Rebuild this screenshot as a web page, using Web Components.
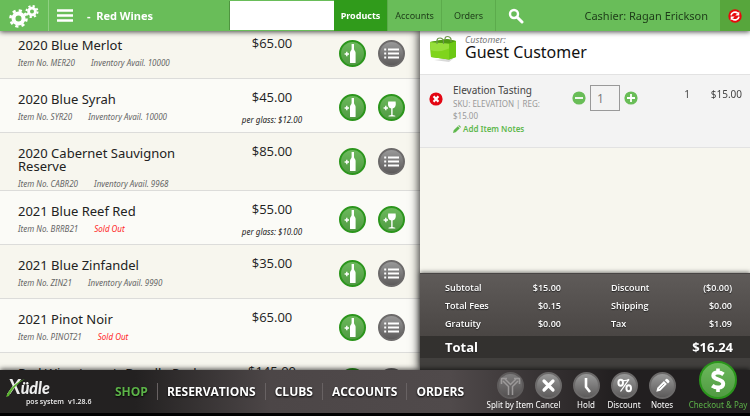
<!DOCTYPE html>
<html lang="en">
<head>
<meta charset="utf-8">
<title>POS - Red Wines</title>
<style>
    html, body {
        margin: 0;
        height: 100%;
    }
    body {
        font-family: "Open Sans", "Noto Sans", sans-serif;
        overflow: hidden;
        background: #000;
    }
</style>
</head>
<body>
<pos-app></pos-app>
<script>
const ICONS = {
    gears: `<svg viewBox="0 0 30 24" width="30" height="24">
        <g fill="none" stroke="#fff">
            <circle cx="9.500" cy="14.500" r="5" stroke-width="4"/>
            <circle cx="9.500" cy="14.500" r="8" stroke-width="2.600" stroke-dasharray="3.140 3.143"/>
            <circle cx="23" cy="7.500" r="3.400" stroke-width="2.800"/>
            <circle cx="23" cy="7.500" r="5.500" stroke-width="2" stroke-dasharray="2.160 2.160"/>
        </g></svg>`,
    menu: `<svg viewBox="0 0 16 13" width="16" height="13"><path d="M0 1.500h16M0 6.500h16M0 11.500h16" stroke="#fff" stroke-width="2.600"/></svg>`,
    search: `<svg viewBox="0 0 16 16" width="16" height="16"><circle cx="6" cy="6" r="4" fill="none" stroke="#fff" stroke-width="2.400"/><path d="M9 9l5 5" stroke="#fff" stroke-width="3" stroke-linecap="round"/></svg>`,
    refresh: `<svg viewBox="0 0 14 14" width="14" height="14"><circle cx="7" cy="7" r="6.700" fill="#e8090d"/>
        <path d="M3 6.400A4 4 0 0 1 9.700 4.200M11 7.600A4 4 0 0 1 4.300 9.800" fill="none" stroke="#fff" stroke-width="1.700"/>
        <path d="M11.300 2.600v4H7.300zM2.700 11.400v-4h4z" fill="#fff"/></svg>`,
    bottle: `<svg viewBox="0 0 27 27"><path d="M12.600 4h2.400v5c0 1.600 1.600 2 1.600 3.700v9.700q0 .6-.6.6h-4.400q-.6 0-.6-.6v-9.700c0-1.700 1.600-2.100 1.600-3.700z" fill="#fff"/><path d="M5.600 14h4.400M7.800 11.800v4.400" stroke="#fff" stroke-width="1.400"/></svg>`,
    glass: `<svg viewBox="0 0 27 27"><path d="M10.200 7.500h7.400c.7 4-.2 6.500-3 7.100v6.300l2.700.8v.8h-6.800v-.8l2.700-.8v-6.300c-2.800-.6-3.700-3.100-3-7.100z" fill="#fff"/><path d="M5.600 14h4.400M7.800 11.800v4.400" stroke="#fff" stroke-width="1.400"/></svg>`,
    list: `<svg viewBox="0 0 27 27"><path d="M6.200 9.500h2M6.200 13.500h2M6.200 17.500h2M10 9.500h11M10 13.500h11M10 17.500h11" stroke="#fff" stroke-width="2"/></svg>`,
    split: `<svg viewBox="0 0 27 27"><g fill="none" stroke="#c4c2c2" stroke-width="1.500"><path d="M11.500 23V14.500L6 9M15.500 23V14.500L21 9M8 7l5.500 5.500L19 7"/><path d="M4.500 12V6.500H10M17 6.500h5.500V12"/></g></svg>`,
    cancel: `<svg viewBox="0 0 27 27"><path d="M9 9l9 9M18 9l-9 9" stroke="#fff" stroke-width="3.200" stroke-linecap="round"/></svg>`,
    hold: `<svg viewBox="0 0 27 27"><path d="M13 6v9l4 5" fill="none" stroke="#fff" stroke-width="2.600" stroke-linejoin="round"/></svg>`,
    discount: `<svg viewBox="0 0 27 27"><g fill="none" stroke="#fff"><ellipse cx="9.700" cy="10.700" rx="2.300" ry="3" stroke-width="2"/><ellipse cx="17.700" cy="16.300" rx="2.300" ry="3" stroke-width="2"/><path d="M11 8.300q4 1 7-1L9.500 19.500" stroke-width="1.300"/></g></svg>`,
    notes: `<svg viewBox="0 0 27 27"><path d="M7.300 19.700l1-4 6.600-6.600 3 3-6.600 6.600zM15.800 8.200l1.200-1.200q.9-.7 1.800.2l1.200 1.200q.9.900.2 1.800L19 11.400z" fill="#fff"/><path d="M10.200 16.800l5-5" stroke="#777" stroke-width=".7"/></svg>`,
    dollar: `<svg viewBox="0 0 38 38"><path d="M24.500 13.300Q22 11.500 19 11.500c-3 0-4.700 1.300-4.700 3.300 0 4.500 9.900 2.800 9.900 8 0 2.300-2 3.800-5.200 3.800q-3.200 0-5.800-2" fill="none" stroke="#fff" stroke-width="4"/><path d="M19 7.500v4M19 26v5" stroke="#fff" stroke-width="3.600"/></svg>`,
    bag: `<svg viewBox="0 0 28 28" width="28" height="28">
        <path d="M5 25l20-2-5 4z" fill="#d9d9d9"/>
        <path d="M1 7l17-3 9 2v16l-7 2.500L2 22z" fill="#5fb80c"/>
        <path d="M1 7l19 1.500v16L2 22z" fill="#7fd41c"/>
        <path d="M1 7l19 1.500v5Q10 18 1.500 15z" fill="#a5e650" opacity=".6"/>
        <path d="M20 8.500L27 6v16l-7 2.500z" fill="#6cc814"/>
        <path d="M1 7l17-3 9 2-7 2.500z" fill="#4f9a12"/>
        <path d="M8 9V6q0-3 3-3t3.500 3v3M16 5V4q0-2.500 2.500-2.500T22 4v3" fill="none" stroke="#6f9a4c" stroke-width="1.200"/></svg>`,
    remove: `<svg viewBox="0 0 14 14" width="14" height="14"><circle cx="7" cy="7" r="6.600" fill="#e30613"/><path d="M4.600 4.300l4.800 5.400M9.400 4.300L4.600 9.700" stroke="#fff" stroke-width="2.200"/></svg>`,
    minus: `<svg viewBox="0 0 14 14" width="14" height="14"><circle cx="7" cy="7" r="6.600" fill="#69bd57"/><path d="M3 7h8" stroke="#fff" stroke-width="1.800"/></svg>`,
    plus: `<svg viewBox="0 0 14 14" width="14" height="14"><circle cx="7" cy="7" r="6.600" fill="#69bd57"/><path d="M3 7h8M7 3v8" stroke="#fff" stroke-width="1.800"/></svg>`,
    pencil: `<svg viewBox="0 0 8 8" width="8" height="8"><path d="M0 8l.7-2.700L4.800 1.200l2 2L2.700 7.300zM5.300.7L6 0l2 2-.7.700z" fill="#5fb84d"/></svg>`,
    swoosh: `<svg viewBox="0 0 20 20" width="20" height="20"><path d="M0 20C3 12 10 5 19 2 12 6 6 12 3 19z" fill="#5cb531"/></svg>`
};

const RESET = `
    button {
        font: inherit;
        color: inherit;
        border: 0;
        padding: 0;
        margin: 0;
        background: none;
        cursor: pointer;
    }
    a {
        color: inherit;
        text-decoration: none;
    }
    svg {
        display: block;
    }
`;

class PosApp extends HTMLElement {
    constructor() {
        super();
        this.attachShadow({ mode: 'open' });
        this.shadowRoot.innerHTML = `
            <style>
                :host {
                    display: grid;
                    grid-template-rows: auto minmax(0, 1fr) auto;
                    height: 100vh;
                }
                main {
                    display: grid;
                    grid-template-columns: 56% 1fr;
                    min-height: 0;
                }
            </style>
            <top-bar heading="Red Wines" cashier="Ragan Erickson"></top-bar>
            <main>
                <product-list></product-list>
                <cart-panel></cart-panel>
            </main>
            <bottom-bar></bottom-bar>
        `;
    }
}

class TopBar extends HTMLElement {
    constructor() {
        super();
        this.attachShadow({ mode: 'open' });
    }

    connectedCallback() {
        this.shadowRoot.innerHTML = `
            <style>
                ${RESET}
                :host {
                    display: flex;
                    height: 31px;
                    background: #69bd59;
                    color: #1d3b18;
                    font-family: "Noto Sans", sans-serif;
                    box-shadow: 0 1px 5px rgba(0, 0, 0, .7);
                    position: relative;
                    z-index: 3;
                }
                .left {
                    display: flex;
                    align-items: center;
                    width: 56%;
                    flex: none;
                }
                .gears {
                    width: 49px;
                    height: 100%;
                    padding-left: 9px;
                    box-sizing: border-box;
                    border-right: 1px solid #8fd082;
                    flex: none;
                }
                .menu {
                    padding: 0 14px 0 8px;
                }
                h1 {
                    margin: 0;
                    flex: 1;
                    font-size: 11px;
                    color: #fff;
                    white-space: pre;
                }
                input {
                    width: 105px;
                    height: 29px;
                    box-sizing: border-box;
                    border: 0;
                    border-left: 1px solid #4f9440;
                    background: #fff;
                    padding: 0 6px;
                }
                .tab {
                    width: 54px;
                    flex: none;
                    box-sizing: border-box;
                    display: flex;
                    align-items: center;
                    justify-content: center;
                    font-size: 9px;
                    border-right: 1px solid #5cab4c;
                }
                .tabs {
                    display: flex;
                    align-self: stretch;
                    margin-right: -76px;
                }
                .tab[aria-current] {
                    background: #309b1b;
                    color: #fff;
                    font-weight: bold;
                }
                .right {
                    flex: 1;
                    display: flex;
                    align-items: center;
                    padding-left: 88px;
                }
                .cashier {
                    margin-left: auto;
                    padding-right: 12px;
                    font-size: 11px;
                }
                .refresh {
                    width: 30px;
                    align-self: stretch;
                    display: flex;
                    align-items: center;
                    justify-content: center;
                    background: #57a63c;
                }
            </style>
            <div class="left">
                <button class="gears" aria-label="Settings">${ICONS.gears}</button>
                <button class="menu" aria-label="Menu">${ICONS.menu}</button>
                <h1>-  ${this.getAttribute('heading')}</h1>
                <input type="text" aria-label="Search text">
                <nav class="tabs">
                    <a class="tab" href="#products" aria-current="page">Products</a>
                    <a class="tab" href="#accounts">Accounts</a>
                    <a class="tab" href="#orders">Orders</a>
                </nav>
            </div>
            <div class="right">
                <button aria-label="Search">${ICONS.search}</button>
                <span class="cashier">Cashier: ${this.getAttribute('cashier')}</span>
                <button class="refresh" aria-label="Refresh">${ICONS.refresh}</button>
            </div>
        `;
    }
}

class RoundButton extends HTMLElement {
    constructor() {
        super();
        this.attachShadow({ mode: 'open' });
    }

    connectedCallback() {
        this.shadowRoot.innerHTML = `
            <style>
                ${RESET}
                :host {
                    display: block;
                }
                button {
                    display: flex;
                    flex-direction: column;
                    align-items: center;
                    width: 100%;
                    white-space: nowrap;
                }
                .disc {
                    width: 27px;
                    height: 27px;
                    box-sizing: border-box;
                    border-radius: 50%;
                    border: 2px solid #6c6a6a;
                    background: linear-gradient(#999, #5d5b5b);
                }
                .disc svg {
                    width: 27px;
                    height: 27px;
                    margin: -2px;
                }
                :host([green]) .disc {
                    border-color: #2b951c;
                    background: linear-gradient(#6cb95c, #509a42);
                }
                :host([large]) .disc, :host([large]) .disc svg {
                    width: 38px;
                    height: 38px;
                }
                :host([dim]) .disc {
                    opacity: .7;
                }
            </style>
            <button aria-label="${this.getAttribute('label') || this.textContent}">
                <span class="disc">${ICONS[this.getAttribute('icon')]}</span>
                <slot></slot>
            </button>
        `;
    }
}

class ProductRow extends HTMLElement {
    constructor() {
        super();
        this.attachShadow({ mode: 'open' });
    }

    connectedCallback() {
        const item = this.getAttribute('item');
        const glass = this.getAttribute('glass');
        const stock = this.getAttribute('stock');
        this.shadowRoot.innerHTML = `
            <style>
                :host {
                    display: grid;
                    grid-template-columns: 1fr 110px 27px 27px;
                    column-gap: 12px;
                    align-items: start;
                    min-height: 54px;
                    box-sizing: border-box;
                    padding: 0 15px 0 18px;
                    border-bottom: 1px solid #dcdcda;
                    background: #f7f6ee;
                    color: #222;
                }
                :host(:nth-of-type(even)) {
                    background: #fbfbf7;
                }
                h2 {
                    margin: 14px 0 4px;
                    font: 13px/13px "Noto Sans", sans-serif;
                }
                p {
                    margin: 0;
                    font-size: 8px;
                    line-height: 13px;
                    font-style: italic;
                    font-family: "Noto Sans", sans-serif;
                    color: #666;
                }
                .stock {
                    margin-left: 14px;
                }
                .out {
                    color: #f22;
                }
                .price {
                    font-size: 13px;
                    line-height: 13px;
                    text-align: center;
                    padding-top: 12px;
                }
                .price p {
                    color: #222;
                    margin-top: 9px;
                }
                round-button {
                    margin-top: 15px;
                }
            </style>
            <div>
                <h2><slot></slot></h2>
                ${item ? `<p>Item No. ${item} <span class="stock ${stock ? '' : 'out'}">${stock ? 'Inventory Avail. ' + stock : 'Sold Out'}</span></p>` : ''}
            </div>
            <div class="price">
                ${this.getAttribute('price')}
                ${glass ? `<p>per glass: ${glass}</p>` : ''}
            </div>
            <round-button green icon="bottle" label="Add bottle"></round-button>
            ${glass
                ? '<round-button green icon="glass" label="Add glass"></round-button>'
                : '<round-button icon="list" label="Options"></round-button>'}
        `;
    }
}

class ProductList extends HTMLElement {
    constructor() {
        super();
        this.attachShadow({ mode: 'open' });
        this.shadowRoot.innerHTML = `
            <style>
                :host {
                    display: block;
                    overflow-y: auto;
                    scrollbar-width: none;
                    background: #f7f6ee;
                }
            </style>
            <product-row item="MER20" stock="10000" price="$65.00">2020 Blue Merlot</product-row>
            <product-row item="SYR20" stock="10000" price="$45.00" glass="$12.00">2020 Blue Syrah</product-row>
            <product-row item="CABR20" stock="9968" price="$85.00">2020 Cabernet Sauvignon Reserve</product-row>
            <product-row item="BRRB21" price="$55.00" glass="$10.00">2021 Blue Reef Red</product-row>
            <product-row item="ZIN21" stock="9990" price="$35.00">2021 Blue Zinfandel</product-row>
            <product-row item="PINOT21" price="$65.00">2021 Pinot Noir</product-row>
            <product-row price="$145.00">Red Wine Lover's Bundle Pack</product-row>
        `;
    }

    connectedCallback() {
        // keep the list slightly scrolled under the top bar
        requestAnimationFrame(() => { this.scrollTop = 6; });
    }
}

class CartItem extends HTMLElement {
    constructor() {
        super();
        this.attachShadow({ mode: 'open' });
    }

    connectedCallback() {
        this.shadowRoot.innerHTML = `
            <style>
                ${RESET}
                :host {
                    display: grid;
                    grid-template-columns: 14px 104px auto 1fr 42px;
                    column-gap: 10px;
                    align-items: start;
                    padding: 8px 8px 11px 9px;
                    background: #f3f3f3;
                    border-top: 1px solid #e2e2e2;
                    border-bottom: 1px solid #e2e2e2;
                    color: #444;
                    font: 10px/15px "Noto Sans", sans-serif;
                }
                .remove {
                    margin-top: 9px;
                }
                .sku {
                    color: #999;
                    font-size: 8px;
                    line-height: 12px;
                }
                .notes {
                    display: flex;
                    align-items: center;
                    gap: 2px;
                    font-size: 8px;
                    line-height: 14px;
                    font-weight: 600;
                    color: #5fb84d;
                }
                .qty {
                    display: flex;
                    align-items: center;
                    gap: 4px;
                    padding-left: 5px;
                    margin-top: 2px;
                }
                input {
                    width: 30px;
                    height: 26px;
                    box-sizing: border-box;
                    border: 1px solid #999;
                    background: #f3f3f3;
                    padding: 0 6px;
                    font: 12px "Open Sans", sans-serif;
                    color: #777;
                }
                .num {
                    text-align: right;
                    margin-top: 4px;
                }
            </style>
            <button class="remove" aria-label="Remove item">${ICONS.remove}</button>
            <div>
                <slot></slot>
                <div class="sku">SKU: ${this.getAttribute('sku')} | REG: ${this.getAttribute('price')}</div>
                <a class="notes" href="#notes">${ICONS.pencil}Add Item Notes</a>
            </div>
            <div class="qty">
                <button aria-label="Decrease">${ICONS.minus}</button>
                <input type="text" value="${this.getAttribute('qty')}" aria-label="Quantity">
                <button aria-label="Increase">${ICONS.plus}</button>
            </div>
            <span class="num">${this.getAttribute('qty')}</span>
            <span class="num">${this.getAttribute('price')}</span>
        `;
    }
}

class OrderTotals extends HTMLElement {
    constructor() {
        super();
        this.attachShadow({ mode: 'open' });
        this.shadowRoot.innerHTML = `
            <style>
                :host {
                    display: block;
                    background: #42403e;
                    color: #fff;
                    padding-bottom: 12px;
                    box-shadow: 0 -1px 4px rgba(0, 0, 0, .5);
                    font-weight: 600;
                    text-shadow: 0 1px 1px #222;
                }
                dl {
                    margin: 0;
                    display: grid;
                    grid-template-columns: 23fr 24fr;
                    column-gap: 50px;
                    padding: 5px 18px 3px 25px;
                    border-top: 1px solid #484544;
                    box-sizing: border-box;
                    font-size: 9px;
                    line-height: 18px;
                    background: linear-gradient(#5f5b59, #4a4644);
                }
                dl div, .total {
                    display: flex;
                    justify-content: space-between;
                }
                dd {
                    margin: 0;
                }
                .total {
                    padding: 0 17px 0 25px;
                    background: #33312f;
                    font-size: 13px;
                    line-height: 22px;
                    font-weight: bold;
                }
            </style>
            <dl>
                <div><dt>Subtotal</dt><dd>$15.00</dd></div>
                <div><dt>Discount</dt><dd>($0.00)</dd></div>
                <div><dt>Total Fees</dt><dd>$0.15</dd></div>
                <div><dt>Shipping</dt><dd>$0.00</dd></div>
                <div><dt>Gratuity</dt><dd>$0.00</dd></div>
                <div><dt>Tax</dt><dd>$1.09</dd></div>
            </dl>
            <div class="total"><span>Total</span><span>$16.24</span></div>
        `;
    }
}

class CartPanel extends HTMLElement {
    constructor() {
        super();
        this.attachShadow({ mode: 'open' });
        this.shadowRoot.innerHTML = `
            <style>
                ${RESET}
                :host {
                    display: flex;
                    flex-direction: column;
                    background: #f7f6ee;
                    box-shadow: 0 0 9px 1px rgba(0, 0, 0, .85);
                    position: relative;
                    z-index: 1;
                }
                header {
                    display: flex;
                    gap: 8px;
                    padding: 4px 9px 6px;
                    height: 43px;
                    box-sizing: border-box;
                    background: #fff;
                }
                small {
                    display: block;
                    font: italic 9px/9px "Noto Sans", sans-serif;
                    color: #777;
                }
                h2 {
                    margin: 0;
                    font: 16px/17px "Noto Sans", sans-serif;
                    color: #111;
                }
                order-totals {
                    margin-top: auto;
                }
            </style>
            <header>
                ${ICONS.bag}
                <div>
                    <small>Customer:</small>
                    <h2>Guest Customer</h2>
                </div>
            </header>
            <cart-item sku="ELEVATION" price="$15.00" qty="1">Elevation Tasting</cart-item>
            <order-totals></order-totals>
        `;
    }
}

class BottomBar extends HTMLElement {
    constructor() {
        super();
        this.attachShadow({ mode: 'open' });
        this.shadowRoot.innerHTML = `
            <style>
                ${RESET}
                :host {
                    display: flex;
                    height: 46px;
                    box-sizing: border-box;
                    border-bottom: 3px solid #000;
                    color: #fff;
                    background: linear-gradient(90deg, #232121 18%, #4c4647 36%, #504a4b 60%, #221f20 82%);
                    box-shadow: 0 -1px 5px rgba(0, 0, 0, .7);
                    position: relative;
                    z-index: 2;
                }
                .logo {
                    width: 98px;
                    box-sizing: border-box;
                    padding: 6px 0 0 8px;
                    position: relative;
                    font: italic 900 16px/20px "Lato", sans-serif;
                    color: #eee;
                }
                .logo b {
                    font-size: 20px;
                    font-weight: bold;
                }
                .logo svg {
                    position: absolute;
                    left: 6px;
                    top: 7px;
                }
                .logo small {
                    display: flex;
                    gap: 4px;
                    font: 600 7px/8px "Open Sans", sans-serif;
                    padding-left: 18px;
                }
                nav {
                    display: flex;
                    align-items: center;
                    font-size: 12px;
                    font-weight: bold;
                    line-height: 17px;
                    text-shadow: 0 1px 2px #000;
                }
                nav a {
                    padding: 0 9px;
                    border-left: 1px solid #686263;
                }
                nav a:first-of-type {
                    color: #5cb348;
                    border: 0;
                    padding-left: 17px;
                }
                .tools {
                    display: flex;
                    align-items: flex-end;
                    margin-left: auto;
                    padding: 0 2px 2px 0;
                    font: 8px/12px "Noto Sans", sans-serif;
                }
                .tools round-button {
                    width: 38px;
                }
                .tools round-button[large] {
                    width: 60px;
                    margin-left: 7px;
                    color: #5cb348;
                }
            </style>
            <div class="logo"><b>X</b>üdle${ICONS.swoosh}<small><span>pos system</span><span>v1.28.6</span></small></div>
            <nav>
                <a href="#shop">SHOP</a>
                <a href="#reservations">RESERVATIONS</a>
                <a href="#clubs">CLUBS</a>
                <a href="#accounts">ACCOUNTS</a>
                <a href="#orders">ORDERS</a>
            </nav>
            <div class="tools">
                <round-button icon="split" dim>Split by Item</round-button>
                <round-button icon="cancel">Cancel</round-button>
                <round-button icon="hold">Hold</round-button>
                <round-button icon="discount">Discount</round-button>
                <round-button icon="notes">Notes</round-button>
                <round-button icon="dollar" green large>Checkout &amp; Pay</round-button>
            </div>
        `;
    }
}

customElements.define('round-button', RoundButton);
customElements.define('product-row', ProductRow);
customElements.define('product-list', ProductList);
customElements.define('cart-item', CartItem);
customElements.define('order-totals', OrderTotals);
customElements.define('cart-panel', CartPanel);
customElements.define('top-bar', TopBar);
customElements.define('bottom-bar', BottomBar);
customElements.define('pos-app', PosApp);
</script>
</body>
</html>
